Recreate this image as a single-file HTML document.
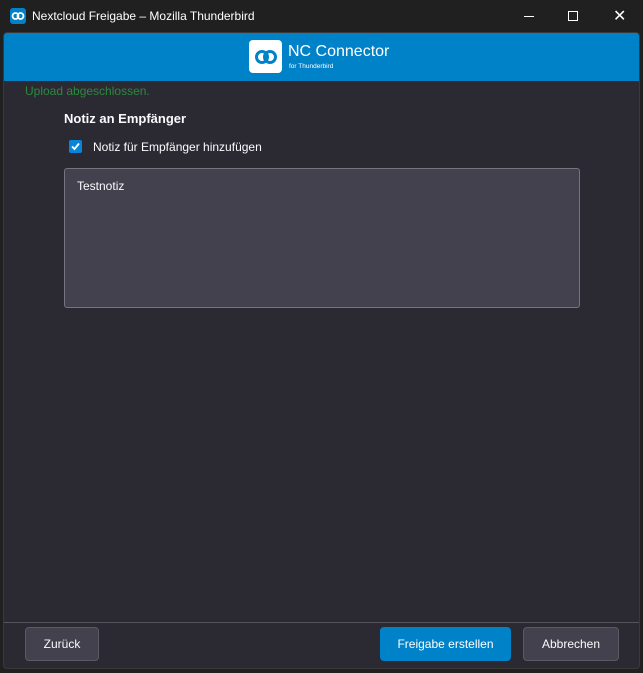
<!DOCTYPE html>
<html><head><meta charset="utf-8"><style>
*{margin:0;padding:0;box-sizing:border-box}
body{width:643px;height:673px;background:#202020;font-family:"Liberation Sans",sans-serif;position:relative;overflow:hidden;color:#fbfbfe}
.abs{position:absolute}
.title{left:32px;top:9px;font-size:12px;color:#fff}
.win{left:3px;top:32px;width:637px;height:637px;background:#2b2a33;border:1px solid #3a3a3a;border-radius:4px;overflow:hidden}
.hdr{left:0;top:0;width:100%;height:48px;background:#0082c9}
.btn{height:34px;border-radius:4px;font-size:12px;display:flex;align-items:center;justify-content:center;top:594px}
.sec{background:#42414d;border:1px solid #5b5a63;color:#fbfbfe}
</style></head><body>
<div class="abs" style="left:10px;top:8px;width:16px;height:16px;background:#0082c9;border-radius:3px"></div>
<svg class="abs" style="left:11px;top:11px" width="14" height="10" viewBox="0 0 14 10"><circle cx="4.5" cy="5" r="3" fill="none" stroke="#fff" stroke-width="1.8"/><circle cx="9.5" cy="5" r="3" fill="none" stroke="#fff" stroke-width="1.8"/></svg>
<div class="abs title">Nextcloud Freigabe – Mozilla Thunderbird</div>
<div class="abs" style="left:524px;top:16px;width:10px;height:1px;background:#fff"></div>
<div class="abs" style="left:568px;top:11px;width:10px;height:10px;border:1px solid #fff"></div>
<div class="abs" style="left:613px;top:6px;font-size:16px;color:#fff">✕</div>
<div class="abs win">
 <div class="abs hdr"></div>
 <div class="abs" style="left:245px;top:7px;width:33px;height:33px;background:#fff;border-radius:4px"></div>
 <svg class="abs" style="left:250px;top:15px" width="24" height="18" viewBox="0 0 24 18"><circle cx="8" cy="9" r="5.5" fill="none" stroke="#0082c9" stroke-width="3"/><circle cx="16" cy="9" r="5.5" fill="none" stroke="#0082c9" stroke-width="3"/></svg>
 <div class="abs" style="left:284px;top:10px;font-size:16px;color:#fff">NC Connector</div>
 <div class="abs" style="left:285px;top:30px;font-size:6.5px;color:#fff">for Thunderbird</div>
 <div class="abs" style="left:21px;top:51px;font-size:12px;color:#2a8a3e">Upload abgeschlossen.</div>
 <div class="abs" style="left:60px;top:78px;font-size:13px;font-weight:bold">Notiz an Empfänger</div>
 <div class="abs" style="left:65px;top:107px;width:13px;height:13px;background:#0a84d6;border-radius:2px"></div>
 <svg class="abs" style="left:66px;top:108px" width="11" height="11" viewBox="0 0 11 11"><path d="M2 5.5L4.5 8L9 2.5" fill="none" stroke="#fff" stroke-width="1.8"/></svg>
 <div class="abs" style="left:89px;top:107px;font-size:12px">Notiz für Empfänger hinzufügen</div>
 <div class="abs" style="left:60px;top:135px;width:516px;height:140px;background:#42414d;border:1px solid #76757d;border-radius:3px"></div>
 <div class="abs" style="left:73px;top:146px;font-size:12px">Testnotiz</div>
 <div class="abs" style="left:0;top:589px;width:100%;height:1px;background:#55545c"></div>
 <div class="abs btn sec" style="left:21px;width:74px">Zurück</div>
 <div class="abs btn" style="left:376px;width:131px;background:#0082c9;color:#fff">Freigabe erstellen</div>
 <div class="abs btn sec" style="left:519px;width:96px">Abbrechen</div>
</div>
</body></html>
